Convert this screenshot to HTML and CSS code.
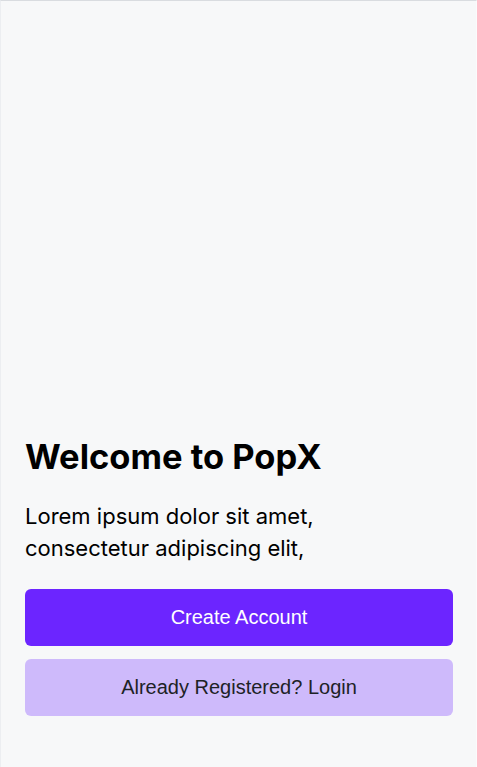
FILE: index.html
```html
<!DOCTYPE html>
<html lang="en">
<head>
<meta charset="utf-8">
<title>PopX</title>
<link rel="stylesheet" href="styles.css">
</head>
<body>
<main class="screen">
  <section class="welcome">
    <h1 class="title">Welcome to PopX</h1>
    <p class="lead">Lorem ipsum dolor sit amet,<br>consectetur adipiscing elit,</p>
    <div class="actions">
      <button class="btn btn-primary" type="button">Create Account</button>
      <button class="btn btn-secondary" type="button">Already Registered? Login</button>
    </div>
  </section>
</main>
</body>
</html>
```
FILE: styles.css
```css
html, body {
  margin: 0;
  padding: 0;
  background: #ffffff;
}
.screen {
  box-sizing: border-box;
  width: 477px;
  height: 767px;
  background: #f7f8f9;
  border-top: 1px solid #d9dce0;
  border-left: 1px solid #eceef1;
  border-right: 1px solid #fbfbfc;
  display: flex;
  flex-direction: column;
  justify-content: flex-end;
  padding: 0 23px 51px 24px;
}
.welcome {
  display: flex;
  flex-direction: column;
}
.title {
  margin: 0;
  font-family: Inter, Roboto, "Liberation Sans", sans-serif;
  font-weight: 700;
  font-size: 34.5px;
  line-height: 40px;
  color: #000;
}
.lead {
  margin: 23px 0 25px;
  font-family: Inter, Roboto, "Liberation Sans", sans-serif;
  font-size: 22px;
  line-height: 32px;
  color: #000;
}
.actions {
  display: flex;
  flex-direction: column;
  gap: 13px;
}
.btn {
  height: 57px;
  border: none;
  border-radius: 6px;
  font-family: "Liberation Sans", Arial, sans-serif;
  font-size: 20px;
  cursor: pointer;
}
.btn-primary {
  background: #6c25ff;
  color: #fff;
}
.btn-secondary {
  background: #cebafb;
  color: #1d2226;
}
```
